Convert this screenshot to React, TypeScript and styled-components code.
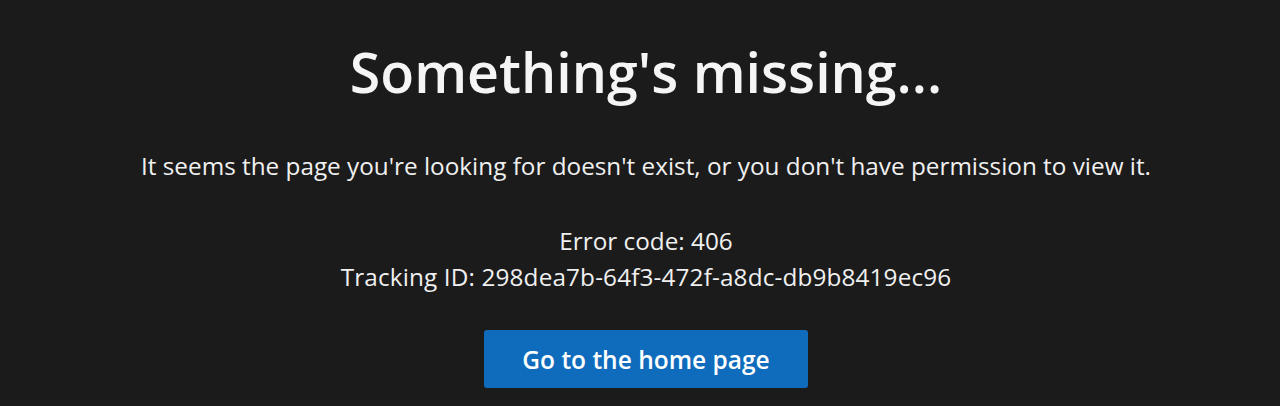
import React from "react";
import styled, { createGlobalStyle } from "styled-components";

const Global = createGlobalStyle`
  html, body { margin: 0; padding: 0; background: #1b1b1b; }
  body { font-family: "Open Sans", "Noto Sans", sans-serif; color: #f2f2f2; }
`;

const Page = styled.main`
  width: 1280px;
  height: 406px;
  box-sizing: border-box;
  background: #1b1b1b;
  display: flex;
  flex-direction: column;
  align-items: center;
  padding: 34px 0 0 12px;
  overflow: hidden;
`;

const Title = styled.h1`
  margin: 0;
  font-size: 55.5px;
  font-weight: 600;
  line-height: 76px;
  color: #f5f5f5;
  white-space: nowrap;
`;

const Message = styled.p`
  margin: 41px 0 0;
  font-size: 24.3px;
  line-height: 30px;
  color: #f0f0f0;
  white-space: nowrap;
`;

const Details = styled.div`
  margin-top: 42px;
  display: flex;
  flex-direction: column;
  align-items: center;
  font-size: 24.3px;
  line-height: 36px;
  color: #f0f0f0;
  white-space: nowrap;
`;

const TrackingLine = styled.span`
  letter-spacing: 0.15px;
`;

const HomeButton = styled.button`
  margin-top: 35px;
  width: 324px;
  height: 58px;
  flex-shrink: 0;
  border: none;
  border-radius: 3px;
  background: #0f6cbd;
  color: #ffffff;
  font-family: inherit;
  font-size: 24.5px;
  font-weight: 600;
  padding: 0;
  cursor: pointer;
`;

export default function App() {
  return (
    <>
      <Global />
      <Page>
        <Title>Something's missing...</Title>
        <Message>
          It seems the page you're looking for doesn't exist, or you don't have permission to view it.
        </Message>
        <Details>
          <span>Error code: 406</span>
          <TrackingLine>Tracking ID: 298dea7b-64f3-472f-a8dc-db9b8419ec96</TrackingLine>
        </Details>
        <HomeButton>Go to the home page</HomeButton>
      </Page>
    </>
  );
}
